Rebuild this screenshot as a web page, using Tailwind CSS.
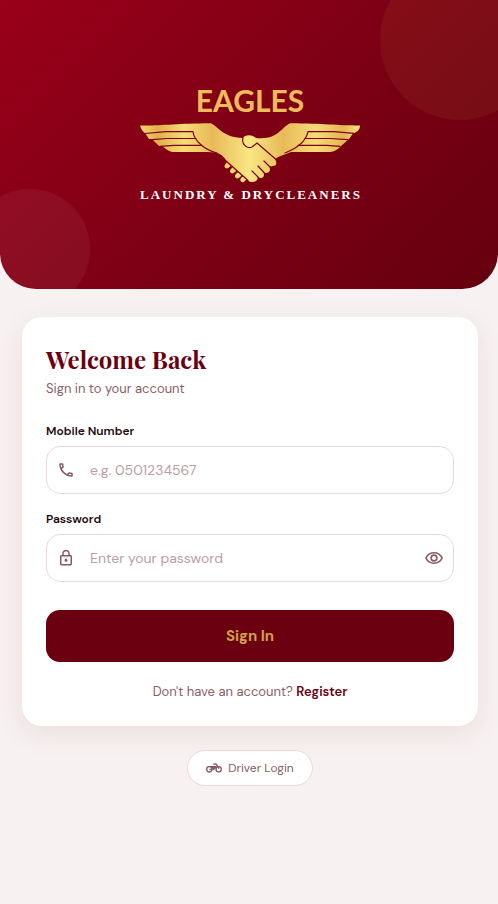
<!DOCTYPE html>
<html lang="en">
<head>
    <meta charset="UTF-8">
    <meta name="viewport" content="width=device-width, initial-scale=1.0">
    <title>Eagles Laundry &amp; Drycleaners - Sign In</title>
    <script src="https://cdn.jsdelivr.net/npm/@tailwindcss/browser@4"></script>
</head>
<body class="min-h-screen bg-[#f7f1f1] font-['DM_Sans',Inter,sans-serif] text-[#1c0a0d]">

    <!-- Header -->
    <header class="relative flex h-[289px] items-center justify-center overflow-hidden rounded-b-[36px] bg-linear-135 from-[#990019] to-[#65000f] pl-0.5">
        <div class="absolute -top-10 -right-[42px] size-40 rounded-full bg-[#c9a24b]/8"></div>
        <div class="absolute -left-[30px] -bottom-5 size-[120px] rounded-full bg-white/5"></div>
        <svg class="relative w-[240px]" viewBox="-10 -8 240 130" role="img" aria-label="Eagles Laundry &amp; Drycleaners">
            <defs>
                <linearGradient id="gold" x1="0" x2="220" y1="0" y2="0" gradientUnits="userSpaceOnUse">
                    <stop offset="0" stop-color="#f3d873"/>
                    <stop offset=".08" stop-color="#e3ae4c"/>
                    <stop offset=".2" stop-color="#f5dc76"/>
                    <stop offset=".33" stop-color="#e9b958"/>
                    <stop offset=".5" stop-color="#f8e784"/>
                    <stop offset=".65" stop-color="#e9b958"/>
                    <stop offset=".8" stop-color="#f5dc76"/>
                    <stop offset=".92" stop-color="#e6b554"/>
                    <stop offset="1" stop-color="#f6e27d"/>
                </linearGradient>
            </defs>
            <text x="110" y="24" text-anchor="middle" class="fill-[#edbb5c] font-[Lato,sans-serif] text-[30px] font-bold">EAGLES</text>
            <!-- small finger tips of the right hand -->
            <g fill="url(#gold)">
                <ellipse cx="88" cy="77" rx="4" ry="2.6" transform="rotate(-45 88 77)"/>
                <ellipse cx="93.500" cy="82" rx="4" ry="2.6" transform="rotate(-45 93.5 82)"/>
                <ellipse cx="98.500" cy="87" rx="4" ry="2.600" transform="rotate(-45 98.5 87)"/>
                <ellipse cx="103.500" cy="91" rx="3.600" ry="2.400" transform="rotate(-45 103.500 91)"/>
            </g>
            <!-- wings, arms and hands -->
            <path fill="url(#gold)" d="M0 37.500C20 38 35 35.500 71 35.300C80 40 82 49 103 50C105 47 111 46 116 50C139 52 140 40 150 35.300C184 35.500 196 37.500 220 37.500C220 42 217 44 213 45.500L209 51L201 58C197 62 194 64 188 64H151C144 67 139 68 135 71C137 74 137 78 133 78C131 79 129 78 129 78C131 82 130 85 126 85C125 85 124 84 123 84C125 87 124 90 120 90L117 88C119 92 116 94 112 94C109 94 107 92 105 90L86 74C86 71 83 67 77 65C74 64 60 64 32 64C26 62 25 60 22 58H19L12 51H9L5 45C2 43 1 41 0 37.500Z"/>
            <g fill="none" stroke="#7d0014" stroke-width="1.200" stroke-linecap="round" stroke-linejoin="round">
                <path d="M5 45.500L26 43.700L53 43.500C54 53 65 62 77 65"/>
                <path d="M12 51.700L27 50.500H56M20 58.300L34 57.300H62"/>
                <path d="M214 45.300L194 43.700H168C166 53 158 60 145 65"/>
                <path d="M208 51.700L190 50.500H165M200 58.300L187 57.300H158"/>
                <path d="M103 50C101 57 108 61 112 59L117 55L135.500 71"/>
                <path d="M124 73L130 79M118 78L124 84.500M112 83L118 89"/>
                <path d="M85 72L108 92.500"/>
            </g>
            <text x="111" y="111" text-anchor="middle" class="fill-white font-['Liberation_Serif',serif] text-[13px] font-bold tracking-[2px]">LAUNDRY &amp; DRYCLEANERS</text>
        </svg>
    </header>

    <main class="pt-7 pr-5 pb-8 pl-[22px]">
        <!-- Login card -->
        <section class="rounded-[20px] bg-white px-6 pt-6 pb-[22px] shadow-[0_8px_30px_rgba(107,0,16,0.08)]">
            <h1 class="font-['Playfair_Display','Liberation_Serif',serif] text-2xl leading-9 font-bold text-[#6b0010]">Welcome Back</h1>
            <p class="text-[13px] leading-6 text-[#8a6065]">Sign in to your account</p>

            <form class="mt-5">
                <label for="mobile" class="block text-xs leading-5 font-semibold">Mobile Number</label>
                <div class="mt-[5px] flex h-12 items-center rounded-[14px] border border-[#ead9db] px-2.5 text-[#855b60]">
                    <svg class="size-[18px] shrink-0" viewBox="0 0 24 24" fill="currentColor" aria-hidden="true">
                        <path d="M6.540 5c.06.89.21 1.760.45 2.590l-1.200 1.200c-.41-1.200-.67-2.470-.76-3.790h1.510m9.860 12.020c.85.24 1.720.39 2.600.45v1.490c-1.320-.09-2.590-.35-3.800-.75l1.200-1.190M7.500 3H4c-.55 0-1 .45-1 1 0 9.390 7.610 17 17 17 .55 0 1-.45 1-1v-3.490c0-.55-.45-1-1-1-1.240 0-2.450-.2-3.570-.57a.98.98 0 0 0-1.020.24l-2.200 2.200a15.150 15.150 0 0 1-6.590-6.590l2.200-2.200c.28-.28.36-.67.25-1.020A11.360 11.360 0 0 1 8.500 4c0-.55-.45-1-1-1z"/>
                    </svg>
                    <input id="mobile" name="mobile" type="tel" placeholder="e.g. 0501234567" class="ml-[15px] min-w-0 flex-1 text-sm text-[#1c0a0d] outline-none placeholder:text-[#b8a0a3]">
                </div>

                <label for="password" class="mt-[15px] block text-xs leading-5 font-semibold">Password</label>
                <div class="mt-[5px] flex h-12 items-center rounded-[14px] border border-[#ead9db] px-2.5 text-[#855b60]">
                    <svg class="size-[18px] shrink-0" viewBox="0 0 24 24" fill="currentColor" aria-hidden="true">
                        <path d="M18 8h-1V6c0-2.760-2.240-5-5-5S7 3.240 7 6v2H6c-1.100 0-2 .9-2 2v10c0 1.100.9 2 2 2h12c1.100 0 2-.9 2-2V10c0-1.100-.9-2-2-2zM9 6c0-1.660 1.340-3 3-3s3 1.340 3 3v2H9V6zm9 14H6V10h12v10zm-6-3c1.100 0 2-.9 2-2s-.9-2-2-2-2 .9-2 2 .9 2 2 2z"/>
                    </svg>
                    <input id="password" name="password" type="password" placeholder="Enter your password" class="ml-[15px] min-w-0 flex-1 text-sm text-[#1c0a0d] outline-none placeholder:text-[#b8a0a3]">
                    <button type="button" aria-label="Show password" class="shrink-0">
                        <svg class="size-[18px]" viewBox="0 0 24 24" fill="none" stroke="currentColor" stroke-width="2.200" aria-hidden="true">
                            <path d="M1.200 12C3.300 7.500 7.300 5 12 5s8.700 2.500 10.800 7c-2.100 4.500-6.100 7-10.800 7S3.300 16.500 1.200 12z"/>
                            <circle cx="12" cy="12" r="3.800"/>
                        </svg>
                    </button>
                </div>

                <button type="submit" class="mt-7 h-13 w-full rounded-[14px] bg-[#6b0010] text-[15px] font-bold text-[#d0a04b]">Sign In</button>
            </form>

            <p class="mt-[18px] text-center text-[13px] leading-6 text-[#8a6065]">
                Don't have an account?
                <a href="#" class="font-semibold text-[#6b0010]">Register</a>
            </p>
        </section>

        <!-- Driver link -->
        <div class="mt-6 flex justify-center">
            <a href="#" class="flex h-9 items-center gap-1.5 rounded-full border border-[#ead9db] bg-white px-[18px] text-xs text-[#855b60]">
                <svg class="size-4" viewBox="0 0 24 24" fill="none" stroke="currentColor" stroke-width="2" aria-hidden="true">
                    <circle cx="5" cy="14" r="4"/>
                    <circle cx="19" cy="14" r="4"/>
                    <path d="M11 6h4l4.500 7M5 14h4"/>
                    <path fill="currentColor" stroke="none" d="M1 9h14l1.500 1.500L12 15h-2C10 11.500 7 9.700 4 10z"/>
                </svg>
                Driver Login
            </a>
        </div>
    </main>
</body>
</html>
